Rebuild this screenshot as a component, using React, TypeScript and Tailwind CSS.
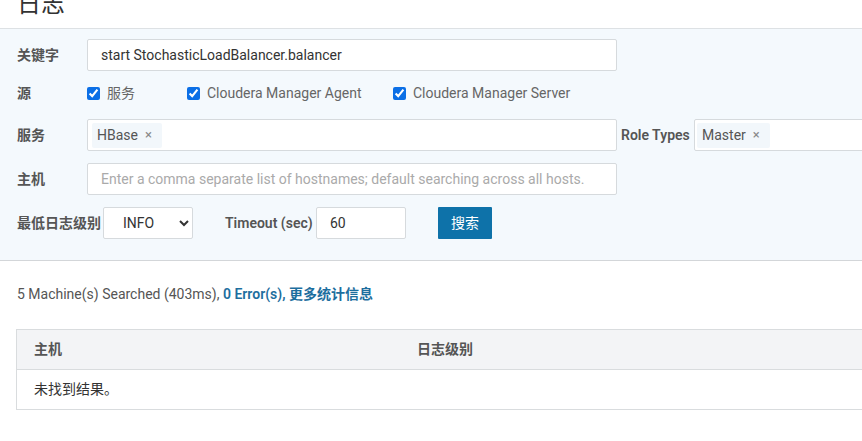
import { useState } from 'react'

const font = { fontFamily: 'Roboto, "Noto Sans CJK SC", sans-serif' }

function Tag({ text }: { text: string }) {
  return (
    <span className="flex items-center h-[25px] pl-[5px] pr-[10px] bg-[#f2f7fb] text-[#555] text-[14px] rounded-[2px]">
      {text}
      <span className="ml-[7px] text-[#888] text-[13px]">×</span>
    </span>
  )
}

function Check({ label, w }: { label: string; w: string }) {
  const [on, setOn] = useState(true)
  return (
    <label className={`flex items-center gap-[7px] text-[14px] text-[#666] ${w}`}>
      <input type="checkbox" checked={on} onChange={e => setOn(e.target.checked)} className="w-[13px] h-[13px] m-0 accent-[#0b6fe6]" />
      {label}
    </label>
  )
}

const inputCls = 'shrink-0 h-[32px] bg-white border border-[#d6dadd] rounded-[2px] px-[13px] text-[14px] text-[#333] outline-none'
const labelCls = 'w-[70px] shrink-0 text-[14px] font-semibold text-[#555]'

export default function App() {
  const [kw, setKw] = useState('start StochasticLoadBalancer.balancer')
  const [timeout, setTimeoutVal] = useState('60')

  return (
    <div className="w-[862px] h-[441px] overflow-hidden bg-white text-[#333]" style={font}>
      {/* titulo */}
      <div className="h-[29px] overflow-hidden border-b border-[#dde1e4]">
        <h1 className="pl-[17px] -mt-[8px] text-[24px] leading-[24px] font-normal text-[#333]">日志</h1>
      </div>

      {/* filtros */}
      <div className="bg-[#f4f9fd] border-b border-[#d3d6d9] pl-[17px] pt-[10px] pb-[21px]">
        <div className="flex items-center">
          <span className={labelCls}>关键字</span>
          <input value={kw} onChange={e => setKw(e.target.value)} className={`${inputCls} w-[530px]`} />
        </div>

        <div className="flex items-center mt-[10px] h-[24px]">
          <span className={labelCls}>源</span>
          <Check label="服务" w="w-[100px]" />
          <Check label="Cloudera Manager Agent" w="w-[206px]" />
          <Check label="Cloudera Manager Server" w="w-[220px]" />
        </div>

        <div className="flex items-center mt-[14px]">
          <span className={labelCls}>服务</span>
          <div className="w-[530px] shrink-0 h-[32px] bg-white border border-[#d6dadd] rounded-[2px] flex items-center pl-[4px]">
            <Tag text="HBase" />
          </div>
          <span className="ml-[4px] w-[73px] shrink-0 text-[14px] font-semibold text-[#555]">Role Types</span>
          <div className="w-[200px] shrink-0 h-[32px] bg-white border border-[#d6dadd] rounded-[2px] flex items-center pl-[2px]">
            <Tag text="Master" />
          </div>
        </div>

        <div className="flex items-center mt-[12px]">
          <span className={labelCls}>主机</span>
          <input
            placeholder="Enter a comma separate list of hostnames; default searching across all hosts."
            className={`${inputCls} w-[530px] placeholder:text-[#aaa]`}
          />
        </div>

        <div className="flex items-center mt-[12px]">
          <span className="w-[86px] shrink-0 text-[14px] font-semibold text-[#555]">最低日志级别</span>
          <select className="w-[90px] h-[32px] bg-white border border-[#d6dadd] rounded-[2px] pl-[15px] text-[14px] text-[#333]">
            <option>INFO</option>
            <option>WARN</option>
            <option>ERROR</option>
          </select>
          <span className="ml-[32px] w-[91px] shrink-0 text-[14px] font-semibold text-[#555]">Timeout (sec)</span>
          <input value={timeout} onChange={e => setTimeoutVal(e.target.value)} className={`${inputCls} w-[90px]`} />
          <button className="ml-[32px] w-[54px] h-[32px] bg-[#0e72a9] text-white text-[14px] rounded-[1px]">搜索</button>
        </div>
      </div>

      {/* resultados */}
      <p className="pl-[17px] mt-[23px] text-[14px] leading-[20px] text-[#555]">
        5 Machine(s) Searched (403ms),{' '}
        <span className="font-semibold text-[#1d6e9e]">0 Error(s), 更多统计信息</span>
      </p>

      <div className="ml-[16px] mt-[25px] border border-[#d9dcde] border-r-0">
        <div className="flex items-center h-[40px] bg-[#f3f4f6] border-b border-[#d9dcde] text-[14px] font-semibold text-[#555]">
          <span className="pl-[17px] w-[400px]">主机</span>
          <span>日志级别</span>
        </div>
        <div className="flex items-center h-[39px] pl-[17px] text-[14px] text-[#333]">未找到结果。</div>
      </div>
    </div>
  )
}
